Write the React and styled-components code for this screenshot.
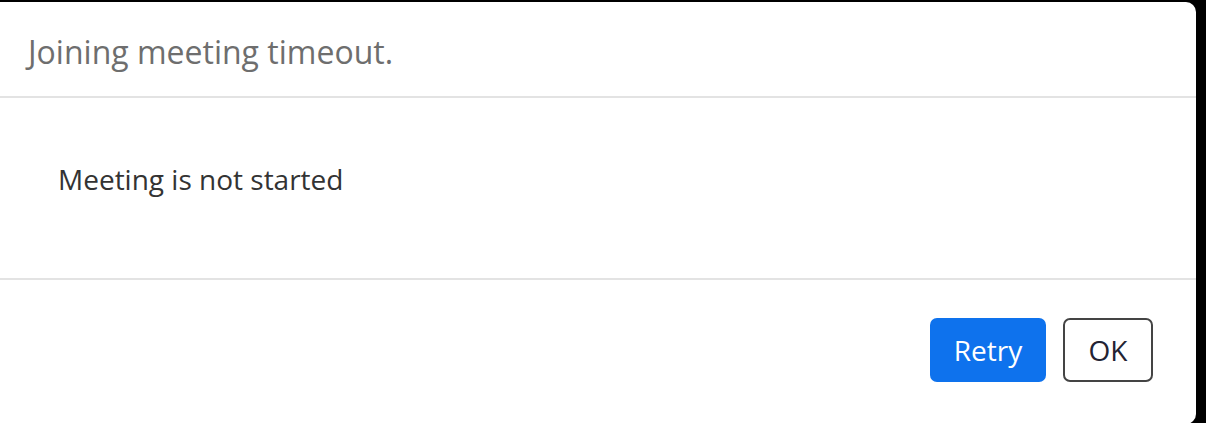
import React from "react";
import styled, { createGlobalStyle } from "styled-components";

const Global = createGlobalStyle`
  html, body { margin: 0; padding: 0; background: #000; }
  body { font-family: "Open Sans", "Noto Sans", sans-serif; }
`;

const Screen = styled.div`
  width: 1206px;
  height: 423px;
  padding: 2px 10px 0 0;
  box-sizing: border-box;
  overflow: hidden;
`;

const Dialog = styled.div`
  width: 1196px;
  height: 422px;
  background: #fff;
  border-radius: 0 10px 10px 0;
  display: flex;
  flex-direction: column;
`;

const Header = styled.div`
  height: 96px;
  flex-shrink: 0;
  box-sizing: border-box;
  padding: 6px 28px 0;
  display: flex;
  align-items: center;
  border-bottom: 2px solid #e3e3e3;
`;

const Title = styled.h2`
  margin: 0;
  font-size: 32px;
  font-weight: 400;
  color: #6e6e6e;
  line-height: 44px;
`;

const Body = styled.div`
  height: 182px;
  flex-shrink: 0;
  box-sizing: border-box;
  padding: 62px 58px 0;
  border-bottom: 2px solid #e3e3e3;
`;

const Message = styled.p`
  margin: 0;
  font-size: 28px;
  line-height: 38px;
  color: #333;
`;

const Footer = styled.div`
  display: flex;
  justify-content: flex-end;
  gap: 17px;
  padding: 38px 43px 0 0;
`;

const Button = styled.button`
  height: 64px;
  min-width: ${(p) => p.$w}px;
  box-sizing: border-box;
  font-family: "Open Sans", "Noto Sans", sans-serif;
  font-size: 28px;
  border-radius: 7px;
  cursor: pointer;
  padding: 0 20px;
  background: ${(p) => (p.$primary ? "#0e72ed" : "#fff")};
  color: ${(p) => (p.$primary ? "#fff" : "#232333")};
  border: ${(p) => (p.$primary ? "none" : "2px solid #444")};
`;

export default function App() {
  return (
    <>
      <Global />
      <Screen>
        <Dialog>
          <Header>
            <Title>Joining meeting timeout.</Title>
          </Header>
          <Body>
            <Message>Meeting is not started</Message>
          </Body>
          <Footer>
            <Button $primary $w={116}>Retry</Button>
            <Button $w={90}>OK</Button>
          </Footer>
        </Dialog>
      </Screen>
    </>
  );
}
